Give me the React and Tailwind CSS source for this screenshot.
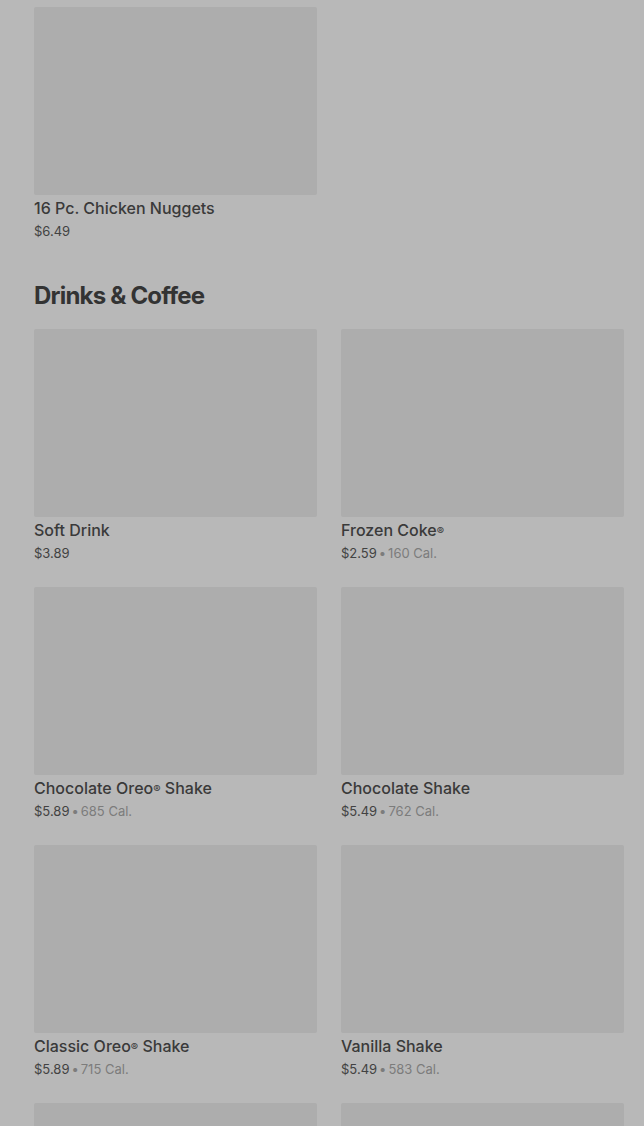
import React from 'react';

const drinks = [
  { name: 'Soft Drink', price: '$3.89' },
  { name: 'Frozen Coke®', price: '$2.59', cal: '160 Cal.' },
  { name: 'Chocolate Oreo® Shake', price: '$5.89', cal: '685 Cal.' },
  { name: 'Chocolate Shake', price: '$5.49', cal: '762 Cal.' },
  { name: 'Classic Oreo® Shake', price: '$5.89', cal: '715 Cal.' },
  { name: 'Vanilla Shake', price: '$5.49', cal: '583 Cal.' },
];

const renderName = (name) => {
  const parts = name.split('®');
  return parts.map((p, i) => (
    <React.Fragment key={i}>
      {p}
      {i < parts.length - 1 && <sup className="text-[11px] relative top-[-1px]">®</sup>}
    </React.Fragment>
  ));
};

const ItemImage = () => <div className="h-[188px] w-full bg-[#adadad] rounded-[2px]" />;

const ItemCard = ({ item }) => (
  <div className="flex flex-col">
    <ItemImage />
    <div className="mt-[3px] text-[16px] leading-[20px] font-medium text-[#3a3a3a]">
      {renderName(item.name)}
    </div>
    <div className="mt-[3px] text-[13px] leading-[20px] text-[#424242]">
      {item.price}
      {item.cal && (
        <span className="text-[#7c7c7c]">
          <span className="mx-[2px]">•</span>
          {item.cal}
        </span>
      )}
    </div>
  </div>
);

export default function App() {
  return (
    <div
      className="w-full h-[1126px] overflow-hidden bg-[#b8b8b8] pl-[34px] pr-[20px] pt-[7px]"
      style={{ fontFamily: 'Inter, "Noto Sans", sans-serif' }}
    >
      <div className="grid grid-cols-2 gap-x-[24px]">
        <ItemCard item={{ name: '16 Pc. Chicken Nuggets', price: '$6.49' }} />
      </div>

      <h2 className="mt-[39px] text-[24px] leading-[32px] font-bold tracking-[-0.8px] text-[#333333]">
        Drinks &amp; Coffee
      </h2>

      <div className="mt-[17px] grid grid-cols-2 gap-x-[24px] gap-y-[24px]">
        {drinks.map((d) => (
          <ItemCard key={d.name} item={d} />
        ))}
        <ItemImage />
        <ItemImage />
      </div>
    </div>
  );
}
